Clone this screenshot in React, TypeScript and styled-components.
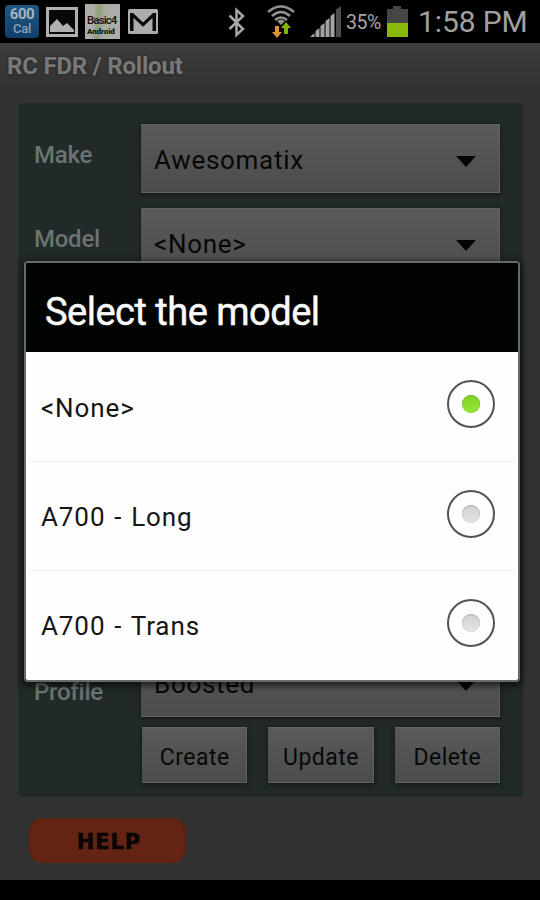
import React, { useState } from "react";
import styled, { createGlobalStyle } from "styled-components";

const Global = createGlobalStyle`
  * { box-sizing: border-box; }
  html, body { margin: 0; background: #000; }
  body { font-family: Roboto, "Noto Sans", sans-serif; }
  button { font: inherit; border: 0; margin: 0; }
`;

const Screen = styled.div`
  position: relative;
  width: 540px;
  height: 900px;
  overflow: hidden;
  display: flex;
  flex-direction: column;
  background: #000;
`;

const StatusBar = styled.header`
  height: 43px;
  flex: none;
  display: flex;
  align-items: flex-start;
  justify-content: space-between;
  color: #a6a6a6;
`;

const StatusIcons = styled.div`
  display: flex;
  padding: 4px 0 0 5px;
`;

const StatusInfo = styled.div`
  display: flex;
  padding: 4px 12px 0 0;
`;

const CalorieBadge = styled.div`
  width: 34px;
  height: 33px;
  margin: 1px 7px 0 0;
  border-radius: 4px;
  background: linear-gradient(#1f5785, #103f68);
  color: #a5b4be;
  text-align: center;
  padding-top: 2px;
`;

const CalorieCount = styled.div`
  font-size: 15px;
  font-weight: 700;
  line-height: 15px;
  letter-spacing: -0.4px;
`;

const CalorieUnit = styled.div`
  font-size: 13px;
  font-weight: 500;
  line-height: 14px;
  letter-spacing: -0.2px;
  color: #8aa3b5;
`;

const BasicBadge = styled.div`
  width: 35px;
  height: 35px;
  margin: 0 7px;
  padding: 9px 0 0 2px;
  background: linear-gradient(95deg, #aaaca5 25%, #8fa074 38%, #a6aa9b 52%, #acaca8 60%);
  color: #111;
  white-space: nowrap;
`;

const BasicName = styled.div`
  font-size: 11.5px;
  font-weight: 500;
  line-height: 14px;
  letter-spacing: -0.9px;
`;

const BasicSub = styled.div`
  font-size: 8px;
  font-weight: 900;
  line-height: 10px;
  letter-spacing: -0.1px;
`;

const Percent = styled.span`
  font-size: 19.5px;
  line-height: 24px;
  margin: 7px 4px 0 4px;
  width: 37px;
  letter-spacing: -0.4px;
  white-space: nowrap;
`;

const Clock = styled.span`
  font-size: 30px;
  line-height: 34px;
  margin: 1px 0 0 10px;
  width: 110px;
  letter-spacing: -0.1px;
  white-space: nowrap;
  color: #a0a0a0;
`;

const AppArea = styled.main`
  flex: none;
  height: 837px;
  background: #323232;
`;

const TitleBar = styled.h1`
  margin: 0;
  height: 45px;
  padding-left: 7px;
  background: linear-gradient(#3d3d3d, #323232);
  color: #787878;
  font-size: 24px;
  font-weight: 700;
  line-height: 46px;
  letter-spacing: -0.2px;
  text-shadow: 0 0 3px #222;
`;

const Panel = styled.section`
  width: 505px;
  height: 694px;
  margin: 15px 0 0 18px;
  padding: 21px 23px 14px 16px;
  border-radius: 5px;
  background: #212a29;
  display: flex;
  flex-direction: column;
`;

const Field = styled.div`
  display: grid;
  grid-template-columns: 107px 359px;
  height: 69px;
  margin-bottom: 15px;
`;

const Label = styled.span`
  padding-top: 17px;
  font-size: 24px;
  font-weight: 500;
  line-height: 28px;
  letter-spacing: -0.25px;
  color: #6c7372;
`;

const LastField = styled(Field)`
  margin-top: auto;
  margin-bottom: 10px;
  ${Label} { padding-top: 30px; }
`;

const Spinner = styled.button`
  height: 69px;
  padding: 3px 24px 0 13px;
  display: flex;
  align-items: center;
  justify-content: space-between;
  background: linear-gradient(#5a5a5a, #4c4c4c);
  box-shadow: inset 0 1px #626464, inset -1px -1px #626464, 0 1px 3px 1px #161c1b;
  color: #060606;
  font-size: 26px;
  letter-spacing: 0.7px;
`;

const Arrow = styled.i`
  margin-top: 2px;
  border: 10px solid transparent;
  border-top: 11px solid #050505;
  border-bottom: 0;
`;

const ButtonRow = styled.div`
  display: flex;
  gap: 21px;
  padding-left: 108px;
`;

const Action = styled.button`
  width: 106px;
  height: 56px;
  padding: 4px 0 0;
  background: linear-gradient(#5a5a5a, #4a4b4b);
  box-shadow: inset 0 1px #626666, inset -1px -1px #5c6262, 0 1px 3px 1px #161c1b;
  color: #080808;
  font-size: 23px;
  letter-spacing: 0.5px;
`;

const HelpButton = styled.button`
  display: block;
  width: 157px;
  height: 45px;
  margin: 21px 0 0 29px;
  padding: 2px 0 0 3px;
  border-radius: 14px;
  background: #642413;
  box-shadow: inset 0 0 3px #55200f;
  color: #0b0504;
  font: 700 21px "DejaVu Sans", sans-serif;
  letter-spacing: 0.9px;
  -webkit-text-stroke: 0.6px #0b0504;
`;

const Dialog = styled.div`
  position: absolute;
  left: 24px;
  top: 261px;
  width: 496px;
  height: 421px;
  border: 2px solid #686a6a;
  border-radius: 4px;
  background: #fefefe;
  box-shadow: 0 2px 6px 2px rgba(0, 0, 0, 0.6);
`;

const DialogTitle = styled.h2`
  margin: 0;
  height: 89px;
  padding-left: 19px;
  background: #020303;
  color: #fafafa;
  font-size: 38px;
  font-weight: 400;
  line-height: 98px;
  letter-spacing: -0.5px;
  -webkit-text-stroke: 0.5px #fafafa;
`;

const Option = styled.div`
  height: 109px;
  margin: 0 4px;
  padding: 0 19px 0 11px;
  display: flex;
  align-items: center;
  justify-content: space-between;
  cursor: pointer;
  & + & { border-top: 1px solid #eeefef; }
`;

const OptionText = styled.span`
  padding-top: 2px;
  font-size: 26px;
  letter-spacing: 0.9px;
  word-spacing: 1.5px;
  color: #161616;
`;

const Radio = styled.span`
  width: 48px;
  height: 48px;
  margin-top: -5px;
  border: 2px solid #525252;
  border-radius: 50%;
  display: grid;
  place-items: center;
`;

const Dot = styled.i<{ $on: boolean }>`
  width: 18px;
  height: 18px;
  border-radius: 50%;
  background: ${(p) => (p.$on ? "linear-gradient(#82d42b, #95e52e)" : "linear-gradient(#d2d2d2, #e4e4e4)")};
  box-shadow: inset 0 1px 1px ${(p) => (p.$on ? "#79b83c" : "#b2b2b2")}, inset 0 0 1px ${(p) => (p.$on ? "#6fa935" : "#bbb")};
`;

const models = ["<None>", "A700 - Long", "A700 - Trans"];

const GalleryIcon = () => (
  <svg width="32" height="36" viewBox="0 0 32 36">
    <rect x="1.5" y="4.5" width="29" height="27" fill="#080808" stroke="#b0b0b0" strokeWidth="3" />
    <path d="M4 28V22l7-7 6 7 4-3 7 7v2z" fill="#b0b0b0" />
  </svg>
);

const MailIcon = () => (
  <svg width="32" height="36" viewBox="0 0 32 36">
    <rect x="1" y="5" width="30" height="25" rx="1.5" fill="#acacac" />
    <path d="M3 27V9h3l10 9.500L26 9h3v18h-3.500V13.800L16 22.800 6.500 13.800V27z" fill="#080808" />
  </svg>
);

const BluetoothIcon = () => (
  <svg width="20" height="36" viewBox="0 0 20 36">
    <path d="M2.500 11.500L16 25l-6.500 6V6L16 12 2.500 25" fill="none" stroke="#a8a8a8" strokeWidth="2.500" />
  </svg>
);

const WifiIcon = () => (
  <svg width="30" height="36" viewBox="0 0 30 36">
    <g fill="none" stroke="#929292" strokeWidth="2.600">
      <path d="M2 8q13-11 26 0M6 12q9-8 18 0M9 16q6-5 12 0" />
    </g>
    <path d="M11 17q4-3 8 0l-4 4z" fill="#929292" />
    <path d="M9 22h4v6h3l-5 6-5-6h3z" fill="#dd9238" />
    <path d="M18 30v-6h-3l5-6 5 6h-3v6z" fill="#81b50b" />
  </svg>
);

const SignalIcon = () => (
  <svg width="33" height="36" viewBox="0 0 33 36">
    <path d="M1 33l4.500-4v4zM6.500 33v-6l4-3v9zM11.500 33V22l4-3v14zM16.500 33V17l4-3v19zM21.500 33V12l4-3v24z" fill="#a4a4a4" />
    <path d="M27 33V5.500L32 2v31z" fill="#4d4d4d" />
  </svg>
);

const BatteryIcon = () => (
  <svg width="21" height="36" viewBox="0 0 21 36">
    <path d="M0 5h6V2h8v3h7v14H0z" fill="#464646" />
    <path d="M0 19h21v14H0z" fill="#88b90a" />
  </svg>
);

const Bluetooth = styled.div`margin-right: 19px;`;
const Wifi = styled.div`margin-right: 13px;`;

export default function App() {
  const [selected, setSelected] = useState(0);
  return (
    <>
      <Global />
      <Screen>
        <StatusBar>
          <StatusIcons>
            <CalorieBadge>
              <CalorieCount>600</CalorieCount>
              <CalorieUnit>Cal</CalorieUnit>
            </CalorieBadge>
            <GalleryIcon />
            <BasicBadge>
              <BasicName>Basic4</BasicName>
              <BasicSub>Android</BasicSub>
            </BasicBadge>
            <MailIcon />
          </StatusIcons>
          <StatusInfo>
            <Bluetooth><BluetoothIcon /></Bluetooth>
            <Wifi><WifiIcon /></Wifi>
            <SignalIcon />
            <Percent>35%</Percent>
            <BatteryIcon />
            <Clock>1:58 PM</Clock>
          </StatusInfo>
        </StatusBar>
        <AppArea>
          <TitleBar>RC FDR / Rollout</TitleBar>
          <Panel>
            <Field><Label>Make</Label><Spinner>Awesomatix<Arrow /></Spinner></Field>
            <Field><Label>Model</Label><Spinner>{models[selected]}<Arrow /></Spinner></Field>
            <LastField><Label>Profile</Label><Spinner>Boosted<Arrow /></Spinner></LastField>
            <ButtonRow>
              <Action>Create</Action>
              <Action>Update</Action>
              <Action>Delete</Action>
            </ButtonRow>
          </Panel>
          <HelpButton>HELP</HelpButton>
        </AppArea>
        <Dialog role="dialog">
          <DialogTitle>Select the model</DialogTitle>
          {models.map((name, i) => (
            <Option key={name} onClick={() => setSelected(i)}>
              <OptionText>{name}</OptionText>
              <Radio><Dot $on={i === selected} /></Radio>
            </Option>
          ))}
        </Dialog>
      </Screen>
    </>
  );
}
